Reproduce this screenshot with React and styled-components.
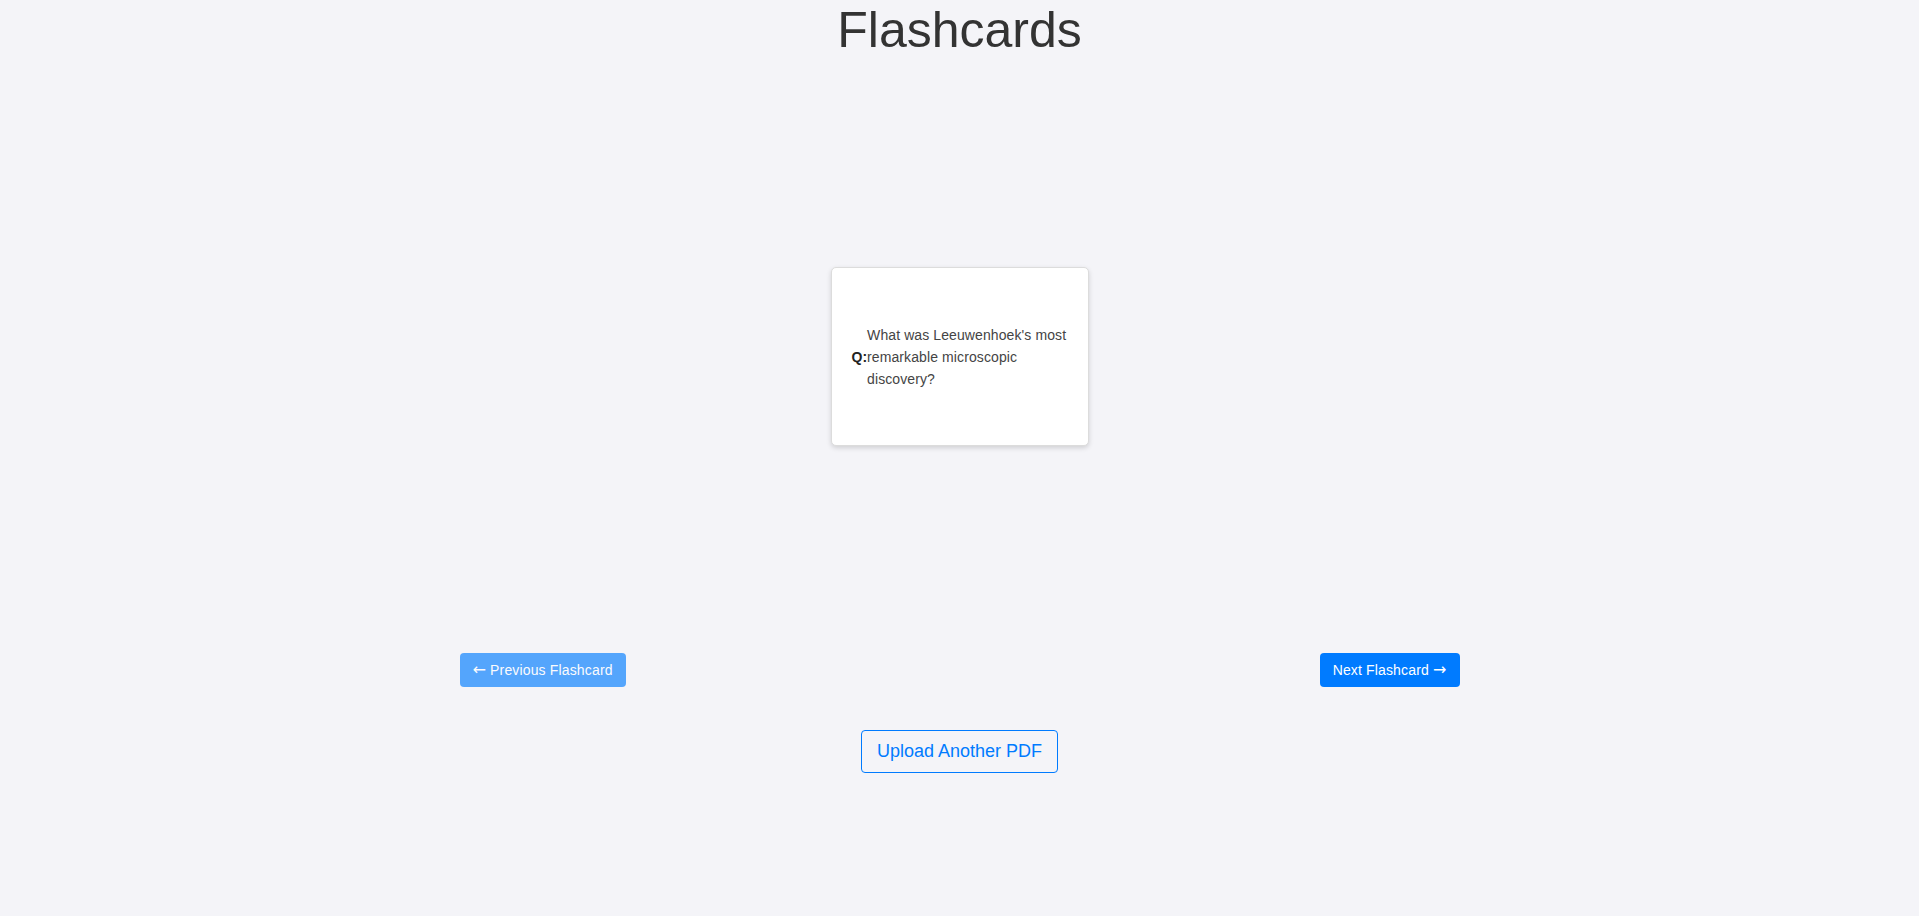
import React from "react";
import styled, { createGlobalStyle } from "styled-components";

const GlobalStyle = createGlobalStyle`
  html, body {
    margin: 0;
    padding: 0;
    background: #f4f4f8;
    font-family: "Liberation Sans", Arial, sans-serif;
  }
`;

const Page = styled.div`
  display: flex;
  flex-direction: column;
  align-items: center;
  min-height: 916px;
`;

const Title = styled.h1`
  margin: 0;
  font-size: 50px;
  line-height: 60px;
  font-weight: 400;
  color: #333;
  text-align: center;
`;

const Stage = styled.div`
  height: 593px;
  display: flex;
  align-items: center;
  justify-content: center;
  width: 100%;
`;

const Card = styled.div`
  box-sizing: border-box;
  width: 258px;
  height: 179px;
  padding: 0 18px 0 20px;
  background: #fff;
  border: 1px solid #dcdcdc;
  border-radius: 5px;
  box-shadow: 0 2px 5px rgba(0, 0, 0, 0.15);
  display: flex;
  align-items: center;
`;

const Label = styled.strong`
  font-size: 14px;
  color: #222;
  flex-shrink: 0;
`;

const QText = styled.span`
  font-size: 14px;
  line-height: 22px;
  letter-spacing: 0.1px;
  color: #444;
`;

const NavRow = styled.div`
  width: 1000px;
  display: flex;
  justify-content: space-between;
`;

const NavButton = styled.button`
  font-family: "Liberation Sans", Arial, sans-serif;
  font-size: 14px;
  line-height: 16px;
  letter-spacing: 0.15px;
  padding: 9px 13px;
  border: none;
  border-radius: 4px;
  color: #fff;
  background: #007bff;
  opacity: ${(p) => (p.disabled ? 0.65 : 1)};
  cursor: pointer;
`;

const Arrow = styled.span`
  font-family: "DejaVu Sans", sans-serif;
  font-size: 16px;
  line-height: 16px;
`;

const UploadButton = styled.button`
  margin-top: 43px;
  font-family: "Liberation Sans", Arial, sans-serif;
  font-size: 18px;
  line-height: 21px;
  padding: 10px 15px;
  background: transparent;
  color: #007bff;
  border: 1px solid #007bff;
  border-radius: 4px;
  cursor: pointer;
`;

export default function App() {
  return (
    <>
      <GlobalStyle />
      <Page>
        <Title>Flashcards</Title>
        <Stage>
          <Card>
            <Label>Q:</Label>
            <QText>What was Leeuwenhoek's most remarkable microscopic discovery?</QText>
          </Card>
        </Stage>
        <NavRow>
          <NavButton disabled>
            <Arrow>←</Arrow> Previous Flashcard
          </NavButton>
          <NavButton>
            Next Flashcard <Arrow>→</Arrow>
          </NavButton>
        </NavRow>
        <UploadButton>Upload Another PDF</UploadButton>
      </Page>
    </>
  );
}
